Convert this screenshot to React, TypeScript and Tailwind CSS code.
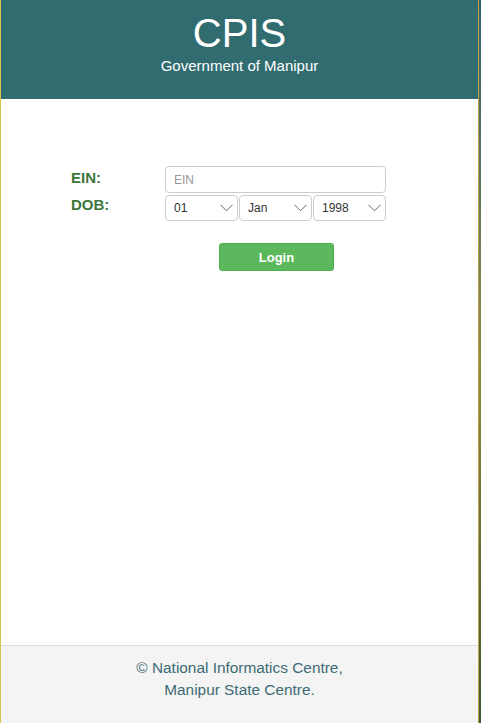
import { useState } from 'react';

const days = Array.from({ length: 31 }, (_, i) => String(i + 1).padStart(2, '0'));
const months = ['Jan', 'Feb', 'Mar', 'Apr', 'May', 'Jun', 'Jul', 'Aug', 'Sep', 'Oct', 'Nov', 'Dec'];
const years = Array.from({ length: 60 }, (_, i) => String(1960 + i));

const Chevron = () => (
  <svg
    className="pointer-events-none absolute right-[5px] top-1/2 -translate-y-1/2"
    width="13"
    height="8"
    viewBox="0 0 13 8"
    fill="none"
  >
    <path d="M0.5 0.8 L6.5 6.8 L12.5 0.8" stroke="#666" strokeWidth="1" />
  </svg>
);

const DobSelect = ({
  value,
  options,
  onChange,
}: {
  value: string;
  options: string[];
  onChange: (v: string) => void;
}) => (
  <div className="relative w-[73px]">
    <select
      value={value}
      onChange={(e) => onChange(e.target.value)}
      className="h-[26px] w-full appearance-none rounded-[4px] border border-[#cccccc] bg-white pl-[8px] text-[12px] text-[#333] outline-none"
    >
      {options.map((o) => (
        <option key={o} value={o}>
          {o}
        </option>
      ))}
    </select>
    <Chevron />
  </div>
);

const App = () => {
  const [ein, setEin] = useState('');
  const [day, setDay] = useState('01');
  const [month, setMonth] = useState('Jan');
  const [year, setYear] = useState('1998');

  return (
    <div className="flex min-h-screen bg-gradient-to-b from-[#2d6470] via-[#8a8c42] to-[#3f5b2e] font-['Liberation_Sans',Arial,sans-serif]">
      <div className="w-px bg-[#d8c34e]" />
      <div className="flex w-[477px] flex-col bg-white">
        <header className="h-[99px] bg-[#316c71] pt-[11px] text-center text-white">
          <h1 className="text-[40px] leading-[44px]">CPIS</h1>
          <p className="mt-[1px] text-[15px] leading-[20px]">Government of Manipur</p>
        </header>

        <main className="flex-1 pl-[69px] pt-[67px]">
          <div className="flex items-center">
            <label className="w-[95px] -translate-y-[1px] pl-[1px] text-[15px] font-bold text-[#3c763d]">EIN:</label>
            <input
              value={ein}
              onChange={(e) => setEin(e.target.value)}
              placeholder="EIN"
              className="h-[27px] w-[221px] rounded-[4px] border border-[#cccccc] px-[8px] text-[12px] text-[#333] outline-none placeholder:text-[#999]"
            />
          </div>
          <div className="mt-[2px] flex items-center">
            <label className="w-[95px] -translate-y-[3px] pl-[1px] text-[15px] font-bold text-[#3c763d]">DOB:</label>
            <div className="flex gap-[1px]">
              <DobSelect value={day} options={days} onChange={setDay} />
              <DobSelect value={month} options={months} onChange={setMonth} />
              <DobSelect value={year} options={years} onChange={setYear} />
            </div>
          </div>
          <div className="mt-[22px] pl-[149px]">
            <button className="h-[28px] w-[115px] rounded-[3px] border border-[#4cae4c] bg-[#5cb85c] pt-[1px] text-[13px] font-bold text-white">
              Login
            </button>
          </div>
        </main>

        <footer className="h-[78px] border-t border-[#dddddd] bg-[#f4f4f4] pt-[11px] text-center text-[15.4px] leading-[22px] text-[#3e6b74]">
          <p>© National Informatics Centre,</p>
          <p>Manipur State Centre.</p>
        </footer>
      </div>
      <div className="w-px bg-[#c9a04a]" />
      <div className="flex-1" />
    </div>
  );
};

export default App;
